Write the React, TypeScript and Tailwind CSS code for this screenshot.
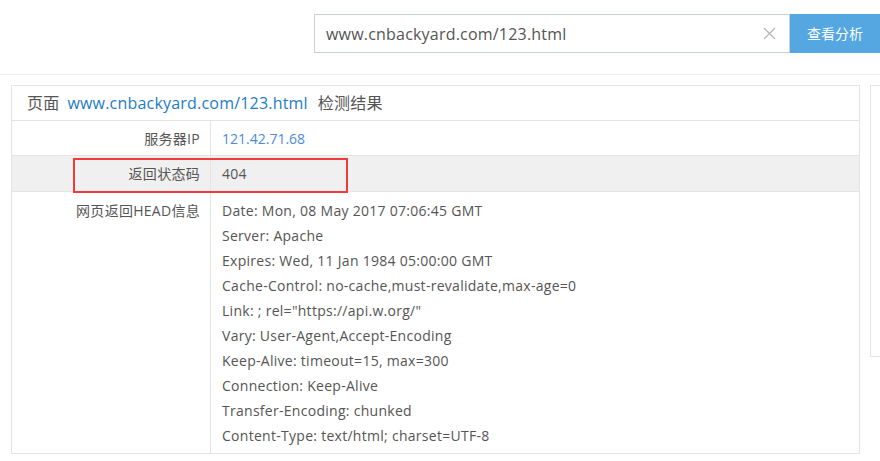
import React from "react";

const font = { fontFamily: '"Open Sans", "Noto Sans CJK SC", sans-serif' };

const headLines = [
  "Date: Mon, 08 May 2017 07:06:45 GMT",
  "Server: Apache",
  "Expires: Wed, 11 Jan 1984 05:00:00 GMT",
  "Cache-Control: no-cache,must-revalidate,max-age=0",
  'Link: ; rel="https://api.w.org/"',
  "Vary: User-Agent,Accept-Encoding",
  "Keep-Alive: timeout=15, max=300",
  "Connection: Keep-Alive",
  "Transfer-Encoding: chunked",
  "Content-Type: text/html; charset=UTF-8",
];

export default function App() {
  return (
    <div className="w-[880px] h-[461px] bg-white overflow-hidden text-[#555] tracking-[0.28px]" style={font}>
      <div className="h-[75px] border-b border-[#efefef] pt-[14px] flex justify-end">
        <div className="flex h-[39px]">
          <div className="w-[476px] border border-[#c8cfdf] flex items-center pl-[11px] pr-[12px]">
            <span className="flex-1 text-[16px] text-[#555] tracking-[0.2px]">www.cnbackyard.com/123.html</span>
            <svg width="13" height="13" viewBox="0 0 13 13" className="mr-[1px]">
              <path d="M1 1L12 12M12 1L1 12" stroke="#b5b5b5" strokeWidth="1.2" />
            </svg>
          </div>
          <button className="w-[90px] bg-[#55a7e2] text-white text-[14px] tracking-normal flex items-center justify-center">查看分析</button>
        </div>
      </div>
      <div className="flex pt-[10px] pl-[11px] gap-[10px]">
        <div className="w-[849px] border border-[#e4e4e4] h-[369px] flex flex-col">
          <div className="h-[35px] flex items-center pl-[15px] text-[16px] tracking-[0.2px] border-b border-[#e4e4e4]">
            <span>页面</span>
            <span className="ml-[8px] text-[#1d7cc6]">www.cnbackyard.com/123.html</span>
            <span className="ml-[10px]">检测结果</span>
          </div>
          <div className="grid grid-cols-[199px_1fr] text-[14px]">
            <div className="h-[35px] flex items-center justify-end pr-[10px] border-r border-b border-[#e4e4e4]">服务器IP</div>
            <div className="h-[35px] flex items-center pl-[11px] border-b border-[#e4e4e4] text-[#4d8ad9] tracking-normal">121.42.71.68</div>
            <div className="h-[36px] bg-[#f0f0f0] relative flex items-center justify-end pr-[10px] border-r border-b border-[#e4e4e4]">
              返回状态码
              <div className="absolute left-[61px] top-[2px] w-[275px] h-[35px] border-2 border-[#f23a3a] z-10" />
            </div>
            <div className="h-[36px] bg-[#f0f0f0] flex items-center pl-[11px] border-b border-[#e4e4e4]">404</div>
            <div className="flex justify-end pr-[10px] pt-[6px] border-r border-[#e4e4e4] leading-[25px] h-[261px]">网页返回HEAD信息</div>
            <div className="pl-[11px] pt-[6px] leading-[25px]">
              {headLines.map((l) => (
                <div key={l}>{l}</div>
              ))}
            </div>
          </div>
        </div>
        <div className="flex-1 h-[272px] border border-[#e4e4e4] border-r-0" />
      </div>
    </div>
  );
}
